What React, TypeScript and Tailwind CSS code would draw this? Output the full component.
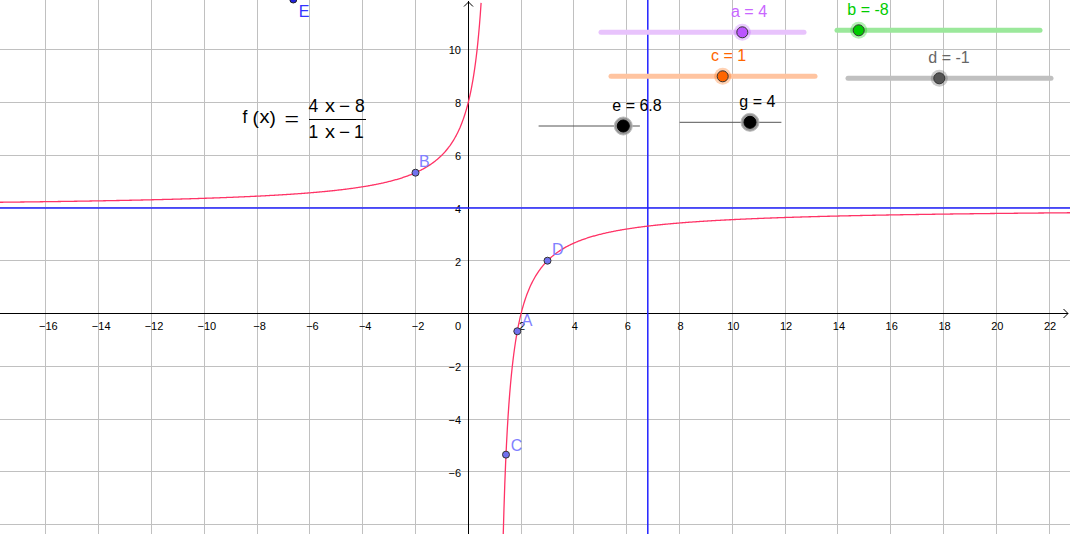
import React from 'react';

// graph view: 26.4 px per unit, origin at (468.3, 313.5)
const UNIT = 26.4;
const OX = 468.3;
const OY = 313.5;
const W = 1070;
const H = 534;

const px = (x: number) => OX + x * UNIT;
const py = (y: number) => OY - y * UNIT;
const snap = (v: number) => Math.round(v - 0.5) + 0.5;

const f = (x: number) => (4 * x - 8) / (1 * x - 1);

function branch(from: number, to: number, steps: number) {
  const pts: string[] = [];
  for (let i = 0; i <= steps; i++) {
    const x = from + ((to - from) * i) / steps;
    pts.push(`${px(x).toFixed(2)},${py(f(x)).toFixed(2)}`);
  }
  return 'M' + pts.join(' L');
}

const FONT = '"Liberation Sans", Arial, sans-serif';

type Slider = {
  x1: number;
  x2: number;
  y: number;
  knob: number;
  color: string;
  line: string;
  label: string;
  lx: number;
  ly: number;
  labelColor: string;
  thin?: boolean;
};

const sliders: Slider[] = [
  { x1: 601, x2: 804, y: 32.3, knob: 742.3, color: '#bb55ff', line: '#e8c3fc', label: 'a = 4', lx: 731, ly: 16.7, labelColor: '#c966ff' },
  { x1: 837, x2: 1040, y: 30.3, knob: 858.7, color: '#00cc00', line: '#9be89b', label: 'b = -8', lx: 847.3, ly: 15, labelColor: '#00cc00' },
  { x1: 611, x2: 815, y: 76.3, knob: 722.7, color: '#ff6600', line: '#ffc4a0', label: 'c = 1', lx: 711, ly: 61, labelColor: '#ff6600' },
  { x1: 848, x2: 1051, y: 78.3, knob: 939.3, color: '#555555', line: '#c0c0c0', label: 'd = -1', lx: 928.3, ly: 63.3, labelColor: '#666666' },
  { x1: 539, x2: 639.5, y: 126, knob: 623.3, color: '#000000', line: '#555555', label: 'e = 6.8', lx: 612.3, ly: 111, labelColor: '#000000', thin: true },
  { x1: 680, x2: 781, y: 122.3, knob: 750, color: '#000000', line: '#555555', label: 'g = 4', lx: 739.3, ly: 106.7, labelColor: '#000000', thin: true },
];

const points = [
  { x: -2, y: f(-2), name: 'B', lx: 419, ly: 166.7 },
  { x: 3, y: f(3), name: 'D', lx: 552, ly: 255 },
  { x: 1.856, y: f(1.856), name: 'A', lx: 521.7, ly: 326 },
  { x: 1.428, y: f(1.428), name: 'C', lx: 510.7, ly: 451 },
];

export default function App() {
  const gridX: number[] = [];
  for (let k = -8; k <= 11; k++) gridX.push(k * 2);
  const gridY: number[] = [];
  for (let k = -4; k <= 5; k++) gridY.push(k * 2);

  const leftBranch = branch(-18, 0.485, 600);
  const rightBranch = branch(1.32, 23, 700);

  return (
    <div className="w-[1070px] h-[534px] bg-white overflow-hidden">
      <svg width={W} height={H} viewBox={`0 0 ${W} ${H}`} className="block" style={{ fontFamily: FONT }}>
        {/* grid */}
        <g stroke="#c0c0c0" strokeWidth={1} shapeRendering="crispEdges">
          {gridX.filter((v) => v !== 0).map((v) => (
            <line key={'gx' + v} x1={snap(px(v))} x2={snap(px(v))} y1={0} y2={H} />
          ))}
          {gridY.filter((v) => v !== 0).map((v) => (
            <line key={'gy' + v} x1={0} x2={W} y1={snap(py(v))} y2={snap(py(v))} />
          ))}
        </g>

        {/* axes */}
        <g stroke="#000" strokeWidth={1} fill="none">
          <line x1={0} x2={W - 2} y1={snap(OY)} y2={snap(OY)} shapeRendering="crispEdges" />
          <line x1={snap(OX)} x2={snap(OX)} y1={1} y2={H} shapeRendering="crispEdges" />
          <path d={`M${snap(OX) - 4.5},6.5 L${snap(OX)},2 L${snap(OX) + 4.5},6.5`} />
          <path d={`M1063.5,${snap(OY) - 4.5} L1068,${snap(OY)} L1063.5,${snap(OY) + 4.5}`} />
        </g>

        {/* tick labels */}
        <g fontSize={11} fill="#000">
          {gridX.filter((v) => v !== 0 && px(v) > 20 && px(v) < W - 10).map((v) => (
            <text key={'lx' + v} x={px(v) + (v < 0 ? 2.5 : 1)} y={329.5} textAnchor="middle">
              {v < 0 ? '\u2212' + Math.abs(v) : v}
            </text>
          ))}
          {gridY.filter((v) => v !== 0 && py(v) > 10 && py(v) < H - 12).map((v) => (
            <text key={'ly' + v} x={461} y={py(v) + 4.8} textAnchor="end">
              {v < 0 ? '\u2212' + Math.abs(v) : v}
            </text>
          ))}
          <text x={461} y={329.5} textAnchor="end">0</text>
        </g>

        {/* asymptote lines */}
        <g stroke="#2222ff" strokeWidth={1.5}>
          <line x1={0} x2={W} y1={208} y2={208} />
          <line x1={647.8} x2={647.8} y1={0} y2={H} />
        </g>

        {/* function graph */}
        <g stroke="#ff3366" strokeWidth={1.3} fill="none">
          <path d={leftBranch} />
          <path d={rightBranch} />
        </g>

        {/* formula */}
        <g fontSize={17.5} fill="#000">
          <text x={242.5} y={123}>f</text>
          <text x={252.5} y={124} fontSize={19}>(</text>
          <text x={259.5} y={123} textLength={10} lengthAdjust="spacingAndGlyphs">x</text>
          <text x={269.5} y={124} fontSize={19}>)</text>
          <text x={284.5} y={124.5} textLength={14.5} lengthAdjust="spacingAndGlyphs">=</text>
          <text x={308.5} y={112}>4</text>
          <text x={325} y={112} textLength={10} lengthAdjust="spacingAndGlyphs">x</text>
          <text x={339} y={112} textLength={11} lengthAdjust="spacingAndGlyphs">{'\u2212'}</text>
          <text x={355} y={112}>8</text>
          <text x={308.5} y={137.5}>1</text>
          <text x={325} y={137.5} textLength={10} lengthAdjust="spacingAndGlyphs">x</text>
          <text x={339} y={137.5} textLength={11} lengthAdjust="spacingAndGlyphs">{'\u2212'}</text>
          <text x={354} y={137.5}>1</text>
          <line x1={309} x2={366} y1={119.5} y2={119.5} stroke="#000" strokeWidth={1} />
        </g>

        {/* sliders */}
        {sliders.map((s) => (
          <g key={s.label}>
            <line
              x1={s.x1}
              x2={s.x2}
              y1={s.y}
              y2={s.y}
              stroke={s.line}
              strokeWidth={s.thin ? 1 : 5}
              strokeLinecap="round"
            />
            <circle cx={s.knob} cy={s.y} r={s.thin ? 9 : 8.5} fill={s.thin ? '#8c8c8c' : s.color} fillOpacity={s.thin ? 0.9 : 0.3} />
            {s.thin && <circle cx={s.knob} cy={s.y} r={9} fill="none" stroke="#bbbbbb" strokeWidth={1} />}
            <circle cx={s.knob} cy={s.y} r={s.thin ? 6 : 5.5} fill={s.color} stroke={s.thin ? '#000' : '#333'} strokeWidth={1} />
            <text x={s.lx} y={s.ly} fontSize={16} fill={s.labelColor}>
              {s.label}
            </text>
          </g>
        ))}

        {/* points */}
        {points.map((p) => (
          <g key={p.name}>
            <circle cx={px(p.x)} cy={py(p.y)} r={3.5} fill="#7171ee" stroke="#333" strokeWidth={1} />
            <text x={p.lx} y={p.ly} fontSize={16} fill="#8080ff">
              {p.name}
            </text>
          </g>
        ))}
        <circle cx={293.3} cy={-0.5} r={3.5} fill="#2222dd" stroke="#222" strokeWidth={1} />
        <text x={298.7} y={16.5} fontSize={16} fill="#3333ff">E</text>
      </svg>
    </div>
  );
}
